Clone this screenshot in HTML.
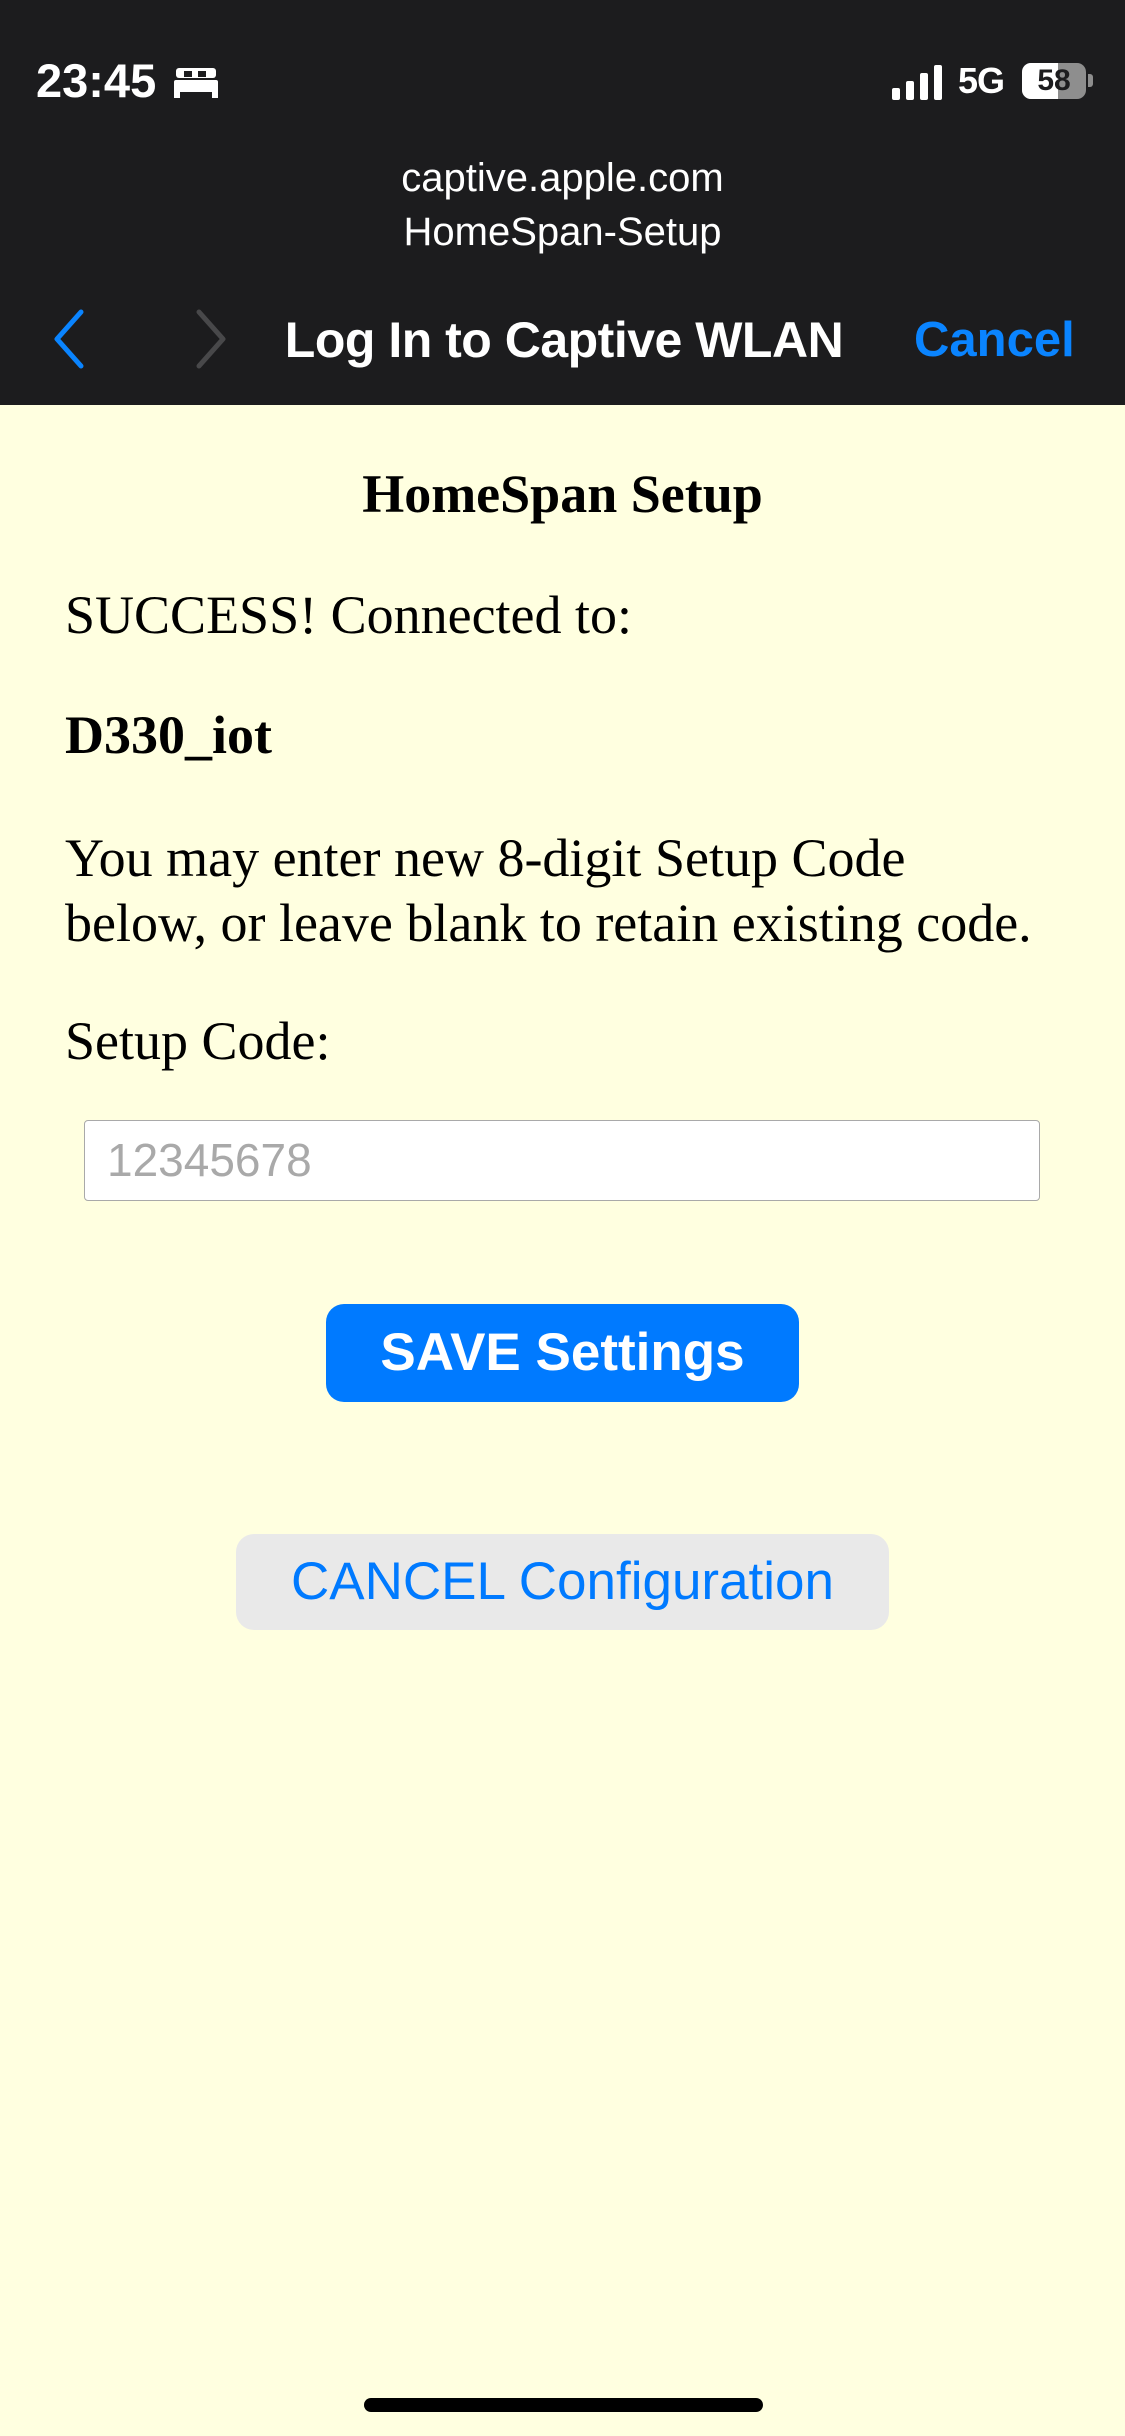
<!DOCTYPE html>
<html><head><meta charset="utf-8"><style>
*{margin:0;padding:0;box-sizing:border-box}
html,body{width:1125px;height:2436px;overflow:hidden;background:#ffffe0}
.hdr{position:absolute;left:0;top:0;width:1125px;height:405px;background:#1c1c1e}
.a{position:absolute;white-space:nowrap}
.sans{font-family:"Liberation Sans",sans-serif}
.serif{font-family:"Liberation Serif",serif;font-size:54px;line-height:54px;color:#000}
</style></head><body>
<div class="hdr"></div>
<div class="a sans" style="left:36px;top:55px;font-size:47px;line-height:52px;color:#fff;font-weight:600;letter-spacing:0px">23:45</div>
<svg class="a" style="left:174px;top:66px" width="48" height="34" viewBox="0 0 48 34"><rect x="2" y="2" width="40" height="10" rx="3" fill="#fff"/><rect x="10" y="5" width="8" height="6" fill="#1c1c1e"/><rect x="24" y="5" width="8" height="6" fill="#1c1c1e"/><rect x="0" y="14" width="44" height="12" rx="2" fill="#fff"/><rect x="0" y="24" width="6" height="8" fill="#fff"/><rect x="38" y="24" width="6" height="8" fill="#fff"/></svg>
<svg class="a" style="left:892px;top:64px" width="52" height="36"><rect x="0" y="24" width="8" height="12" rx="2" fill="#fff"/><rect x="14" y="17" width="8" height="19" rx="2" fill="#fff"/><rect x="28" y="9" width="8" height="27" rx="2" fill="#fff"/><rect x="42" y="1" width="8" height="35" rx="2" fill="#fff"/></svg>
<div class="a sans" style="left:958px;top:60px;font-size:36px;line-height:42px;color:#fff;font-weight:600;letter-spacing:-1px">5G</div>
<div class="a" style="left:1022px;top:63px;width:64px;height:36px;border-radius:9px;background:#8e8e8e;overflow:hidden"><div style="width:36px;height:36px;background:#fff"></div></div>
<div class="a" style="left:1088px;top:74px;width:5px;height:13px;border-radius:0 3px 3px 0;background:#8e8e8e"></div>
<div class="a sans" style="left:1022px;top:63px;width:64px;text-align:center;font-size:30px;line-height:36px;font-weight:700;color:#1c1c1e">58</div>
<div class="a sans" style="left:0;width:1125px;text-align:center;top:155px;font-size:40px;line-height:46px;color:#fff">captive.apple.com</div>
<div class="a sans" style="left:0;width:1125px;text-align:center;top:209px;font-size:40px;line-height:46px;color:#fff">HomeSpan-Setup</div>
<svg class="a" style="left:48px;top:308px" width="40" height="62"><path d="M33 4 L9 31 L33 58" stroke="#0a84ff" stroke-width="5" fill="none" stroke-linecap="round" stroke-linejoin="round"/></svg>
<svg class="a" style="left:192px;top:308px" width="40" height="62"><path d="M7 4 L31 31 L7 58" stroke="#48484a" stroke-width="5" fill="none" stroke-linecap="round" stroke-linejoin="round"/></svg>
<div class="a sans" style="left:274px;top:310px;width:580px;text-align:center;font-size:50px;line-height:60px;color:#fff;font-weight:600;letter-spacing:-0.5px">Log In to Captive WLAN</div>
<div class="a sans" style="left:914px;top:310px;font-size:49px;line-height:60px;color:#0a84ff;font-weight:600">Cancel</div>

<div class="a serif" style="left:0;width:1125px;text-align:center;top:467px;font-weight:700">HomeSpan Setup</div>
<div class="a serif" style="left:65px;top:588px">SUCCESS! Connected to:</div>
<div class="a serif" style="left:65px;top:708px;font-weight:700">D330_iot</div>
<div class="a serif" style="left:65px;top:831px">You may enter new 8-digit Setup Code</div>
<div class="a serif" style="left:65px;top:896px">below, or leave blank to retain existing code.</div>
<div class="a serif" style="left:65px;top:1014px">Setup Code:</div>
<div class="a" style="left:84px;top:1120px;width:956px;height:81px;background:#fff;border:1.5px solid #a9a9a9;border-radius:4px"></div>
<div class="a sans" style="left:107px;top:1134px;font-size:46px;line-height:52px;color:#a9a9a9">12345678</div>
<div class="a sans" style="left:326px;top:1304px;width:473px;height:98px;background:#007aff;border-radius:18px;color:#fff;font-weight:700;font-size:53px;line-height:98px;text-align:center">SAVE Settings</div>
<div class="a sans" style="left:236px;top:1534px;width:653px;height:96px;background:#e9e9e9;border-radius:18px;color:#007aff;font-size:53px;line-height:96px;text-align:center">CANCEL Configuration</div>
<div class="a" style="left:364px;top:2398px;width:399px;height:14px;border-radius:7px;background:#000"></div>
</body></html>
